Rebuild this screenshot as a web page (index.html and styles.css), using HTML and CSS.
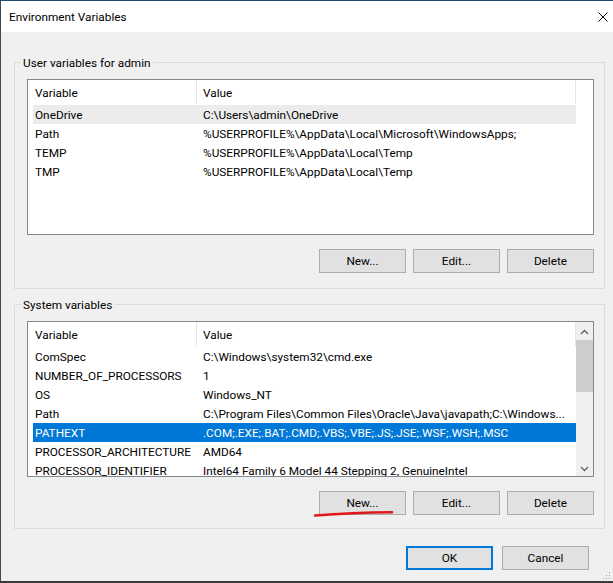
FILE: index.html
```html
<!DOCTYPE html>
<html lang="en">
<head>
    <meta charset="UTF-8">
    <title>Environment Variables</title>
    <link rel="stylesheet" href="styles.css">
</head>
<body>
    <div class="window">
        <div class="titlebar">
            <span class="title">Environment Variables</span>
            <svg class="close-icon" width="10" height="10" viewBox="0 0 10 10">
                <path d="M0.5 0.5 L9.5 9.5 M9.5 0.5 L0.5 9.5" stroke="#000" stroke-width="1" fill="none"/>
            </svg>
        </div>

        <div class="content">
            <!-- User variables -->
            <div class="group">
                <span class="group-title">User variables for admin</span>
                <div class="list">
                    <div class="list-main">
                        <div class="list-head">
                            <div class="col-var">Variable</div>
                            <div class="col-val">Value</div>
                        </div>
                        <div class="row row-focus"><div class="col-var">OneDrive</div><div class="col-val">C:\Users\admin\OneDrive</div></div>
                        <div class="row"><div class="col-var">Path</div><div class="col-val">%USERPROFILE%\AppData\Local\Microsoft\WindowsApps;</div></div>
                        <div class="row"><div class="col-var">TEMP</div><div class="col-val">%USERPROFILE%\AppData\Local\Temp</div></div>
                        <div class="row"><div class="col-var">TMP</div><div class="col-val">%USERPROFILE%\AppData\Local\Temp</div></div>
                    </div>
                </div>
                <div class="buttons">
                    <button class="btn">New...</button>
                    <button class="btn btn-edit">Edit...</button>
                    <button class="btn">Delete</button>
                </div>
            </div>

            <!-- System variables -->
            <div class="group group-system">
                <span class="group-title">System variables</span>
                <div class="list">
                    <div class="list-main">
                        <div class="list-head">
                            <div class="col-var">Variable</div>
                            <div class="col-val">Value</div>
                        </div>
                        <div class="row"><div class="col-var">ComSpec</div><div class="col-val">C:\Windows\system32\cmd.exe</div></div>
                        <div class="row"><div class="col-var">NUMBER_OF_PROCESSORS</div><div class="col-val">1</div></div>
                        <div class="row"><div class="col-var">OS</div><div class="col-val">Windows_NT</div></div>
                        <div class="row"><div class="col-var">Path</div><div class="col-val">C:\Program Files\Common Files\Oracle\Java\javapath;C:\Windows...</div></div>
                        <div class="row row-selected"><div class="col-var">PATHEXT</div><div class="col-val">.COM;.EXE;.BAT;.CMD;.VBS;.VBE;.JS;.JSE;.WSF;.WSH;.MSC</div></div>
                        <div class="row"><div class="col-var">PROCESSOR_ARCHITECTURE</div><div class="col-val">AMD64</div></div>
                        <div class="row"><div class="col-var">PROCESSOR_IDENTIFIER</div><div class="col-val">Intel64 Family 6 Model 44 Stepping 2, GenuineIntel</div></div>
                    </div>
                    <div class="scrollbar">
                        <div class="scroll-btn">
                            <svg width="9" height="6" viewBox="0 0 9 6"><path d="M1 5 L4.5 1.5 L8 5" stroke="#606060" stroke-width="1.3" fill="none"/></svg>
                        </div>
                        <div class="scroll-track">
                            <div class="scroll-thumb"></div>
                        </div>
                        <div class="scroll-btn">
                            <svg width="9" height="6" viewBox="0 0 9 6"><path d="M1 1 L4.5 4.5 L8 1" stroke="#606060" stroke-width="1.3" fill="none"/></svg>
                        </div>
                    </div>
                </div>
                <div class="buttons">
                    <button class="btn">New...</button>
                    <button class="btn btn-edit">Edit...</button>
                    <button class="btn">Delete</button>
                </div>
            </div>

            <div class="dialog-buttons">
                <button class="btn btn-default">OK</button>
                <button class="btn">Cancel</button>
            </div>
        </div>

        <!-- red pen mark under the second New... -->
        <svg class="annotation" width="613" height="583" viewBox="0 0 613 583">
            <path d="M315 515.5 Q352 512.6 392 512.3" stroke="#e0191b" stroke-width="2.6" stroke-linecap="round" fill="none"/>
        </svg>

        <svg class="grip" width="8" height="8" viewBox="0 0 8 8">
            <rect x="6" y="0" width="1" height="1" fill="#a0a0a0"/>
            <rect x="3" y="3" width="1" height="1" fill="#a0a0a0"/>
            <rect x="6" y="3" width="1" height="1" fill="#a0a0a0"/>
            <rect x="0" y="6" width="1" height="1" fill="#a0a0a0"/>
            <rect x="3" y="6" width="1" height="1" fill="#a0a0a0"/>
            <rect x="6" y="6" width="1" height="1" fill="#a0a0a0"/>
        </svg>
    </div>
</body>
</html>
```
FILE: styles.css
```css
body {
    margin: 0;
    font-family: Roboto, "Liberation Sans", sans-serif;
    font-size: 11.8px;
    color: #000;
}

.window {
    position: relative;
    width: 613px;
    height: 583px;
    box-sizing: border-box;
    border-top: 1px solid #1d4a6e;
    border-left: 1px solid #3d4a56;
    border-bottom: 2px solid #3a3a3a;
    background: #f0f0f0;
    overflow: hidden;
}

/* title bar */
.titlebar {
    height: 31px;
    background: #fff;
    display: flex;
    align-items: center;
    justify-content: space-between;
    padding: 0 5px 0 8px;
}

.title {
    line-height: 31px;
    padding-top: 1px;
}

.close-icon {
    display: block;
}

/* dialog body */
.content {
    padding: 30px 8px 0 13px;
}

.group {
    position: relative;
    border: 1px solid #dcdcdc;
    padding: 16px 10px 15px 12px;
}

.group-system {
    margin-top: 15px;
    padding-bottom: 13px;
}

.group-title {
    position: absolute;
    top: -8px;
    left: 6px;
    padding: 1px 2px 0;
    line-height: 15px;
    background: #f0f0f0;
}

/* list view */
.list {
    height: 156px;
    box-sizing: border-box;
    border: 1px solid #828790;
    background: #fff;
    display: flex;
    overflow: hidden;
}

.list-main {
    width: 548px;
    padding-left: 5px;
    box-sizing: border-box;
    overflow: hidden;
}

.list-head {
    display: flex;
    height: 25px;
    line-height: 24px;
}

.list-head .col-var,
.list-head .col-val {
    border-right: 1px solid #e5e5e5;
    height: 24px;
    padding-top: 1px;
}

.row {
    display: flex;
    height: 19px;
    line-height: 19px;
    white-space: nowrap;
}

.row > div {
    padding-top: 1px;
    height: 19px;
}

.col-var {
    width: 164px;
    box-sizing: border-box;
    padding-left: 2px;
    flex-shrink: 0;
}

.col-val {
    width: 379px;
    box-sizing: border-box;
    padding-left: 6px;
    flex-shrink: 0;
    overflow: hidden;
}

.row-focus {
    background: #ececec;
}

.row-selected {
    background: #0078d7;
    color: #fff;
}

/* vertical scrollbar */
.scrollbar {
    width: 17px;
    display: flex;
    flex-direction: column;
    background: #f0f0f0;
}

.scroll-btn {
    height: 17px;
    display: flex;
    align-items: center;
    justify-content: center;
}

.scroll-btn svg {
    display: block;
    margin-top: 2px;
}

.scroll-track {
    flex: 1;
    padding-top: 1px;
}

.scroll-thumb {
    height: 52px;
    background: #cdcdcd;
}

/* buttons */
.buttons {
    display: flex;
    justify-content: flex-end;
    gap: 7px;
    margin-top: 14px;
}

.btn-edit {
    margin-left: 1px;
}

.btn {
    width: 87px;
    height: 24px;
    box-sizing: border-box;
    background: #e1e1e1;
    border: 1px solid #adadad;
    font-family: inherit;
    font-size: inherit;
    color: #000;
    padding: 0;
    margin: 0;
}

.btn-default {
    border: 2px solid #0078d7;
}

.dialog-buttons {
    display: flex;
    justify-content: flex-end;
    gap: 9px;
    margin-top: 17px;
    padding-right: 16px;
}

/* overlays */
.annotation {
    position: absolute;
    top: -1px;
    left: -1px;
    pointer-events: none;
}

.grip {
    position: absolute;
    right: 2px;
    bottom: 1px;
}
```
